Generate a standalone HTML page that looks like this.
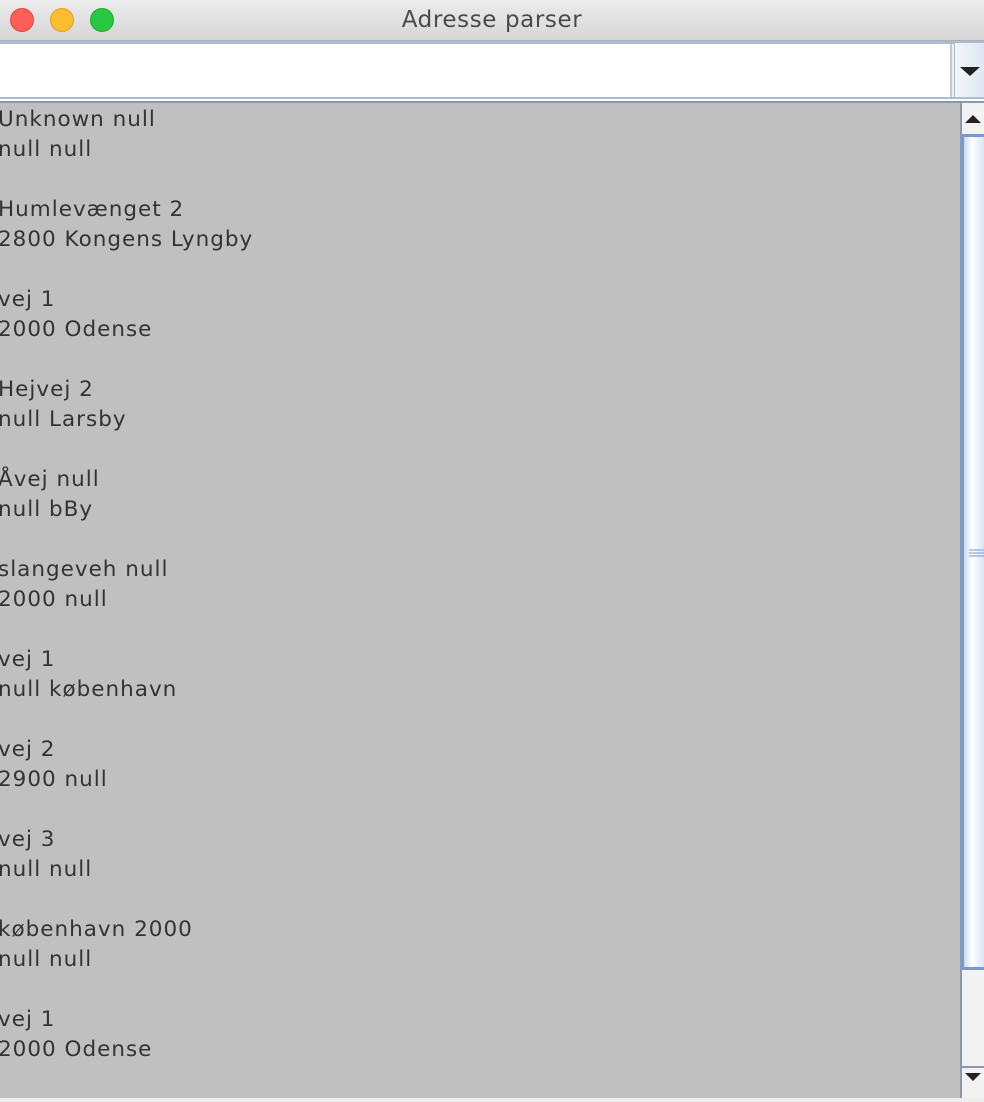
<!DOCTYPE html>
<html><head><style>
*{margin:0;padding:0;box-sizing:border-box}
body{width:984px;height:1098px;overflow:hidden;background:#eee;position:relative;font-family:"DejaVu Sans","Liberation Sans",sans-serif}
.title{position:absolute;left:0;top:0;width:984px;height:41px;background:linear-gradient(#ececec,#d6d6d6);border-bottom:1px solid #b0b0b0}
.title .t{position:absolute;left:0;right:0;top:7px;text-align:center;font-size:23px;letter-spacing:0.6px;color:#4a4a4a}
.dot{position:absolute;top:8px;width:24px;height:24px;border-radius:50%}
.sep{position:absolute;left:0;top:41px;width:984px;height:3px;background:#a8bcd4}
.field{position:absolute;left:0;top:44px;width:952px;height:54px;background:#fff;border-right:2px solid #b8cce0}
.btn{position:absolute;left:954px;top:43px;width:30px;height:56px;background:linear-gradient(90deg,#f4f6fa,#dfe7f2);border-left:1px solid #a8bcd4}
.sep2{position:absolute;left:0;top:97px;width:984px;height:6px;background:#fff;border-top:2px solid #a8bcd4;border-bottom:2px solid #8a9aae}
.list{position:absolute;left:0;top:103px;width:960px;height:995px;background:#c0c0c0;padding-top:2px;color:#333;font-size:21.5px;line-height:30px;letter-spacing:1px}
.list div{margin-bottom:30px;margin-left:-2px}
.sb{position:absolute;left:960px;top:103px;width:24px;height:995px;background:#f2f2f2;border-left:2px solid #8a9aae}
.thumb{position:absolute;left:961px;top:134px;width:23px;height:836px;border:3px solid #7898d0;border-right:none;background:linear-gradient(90deg,#c8d8f0,#fff 40%,#d8e4f4)}
</style></head><body>
<div class="title"><div class="dot" style="left:10px;background:#fe5f57;border:1px solid #e0443e"></div><div class="dot" style="left:50px;background:#febc2e;border:1px solid #dea123"></div><div class="dot" style="left:90px;background:#28c840;border:1px solid #1aab29"></div><div class="t">Adresse parser</div></div>
<div class="sep"></div>
<div class="field"></div>
<div class="btn"><svg width="30" height="56"><path d="M5 24h20l-10 9z" fill="#222"/></svg></div>
<div class="sep2"></div>
<div class="list">
<div>Unknown null<br>null null</div>
<div>Humlevænget 2<br>2800 Kongens Lyngby</div>
<div>vej 1<br>2000 Odense</div>
<div>Hejvej 2<br>null Larsby</div>
<div>Åvej null<br>null bBy</div>
<div>slangeveh null<br>2000 null</div>
<div>vej 1<br>null københavn</div>
<div>vej 2<br>2900 null</div>
<div>vej 3<br>null null</div>
<div>københavn 2000<br>null null</div>
<div>vej 1<br>2000 Odense</div>
</div>
<div class="sb"><svg width="23" height="995"><path d="M3 20h16l-8-8z" fill="#222"/><path d="M3 970h16l-8 8z" fill="#222"/></svg></div>
<div class="thumb"><svg width="20" height="830" style="position:absolute;left:3px;top:0"><path d="M2 413h16M2 416h16M2 419h16" stroke="#7898d0" stroke-width="1"/></svg></div>
<div style="position:absolute;left:961px;top:1066px;width:23px;height:2px;background:#8a9aae"></div>
</body></html>
